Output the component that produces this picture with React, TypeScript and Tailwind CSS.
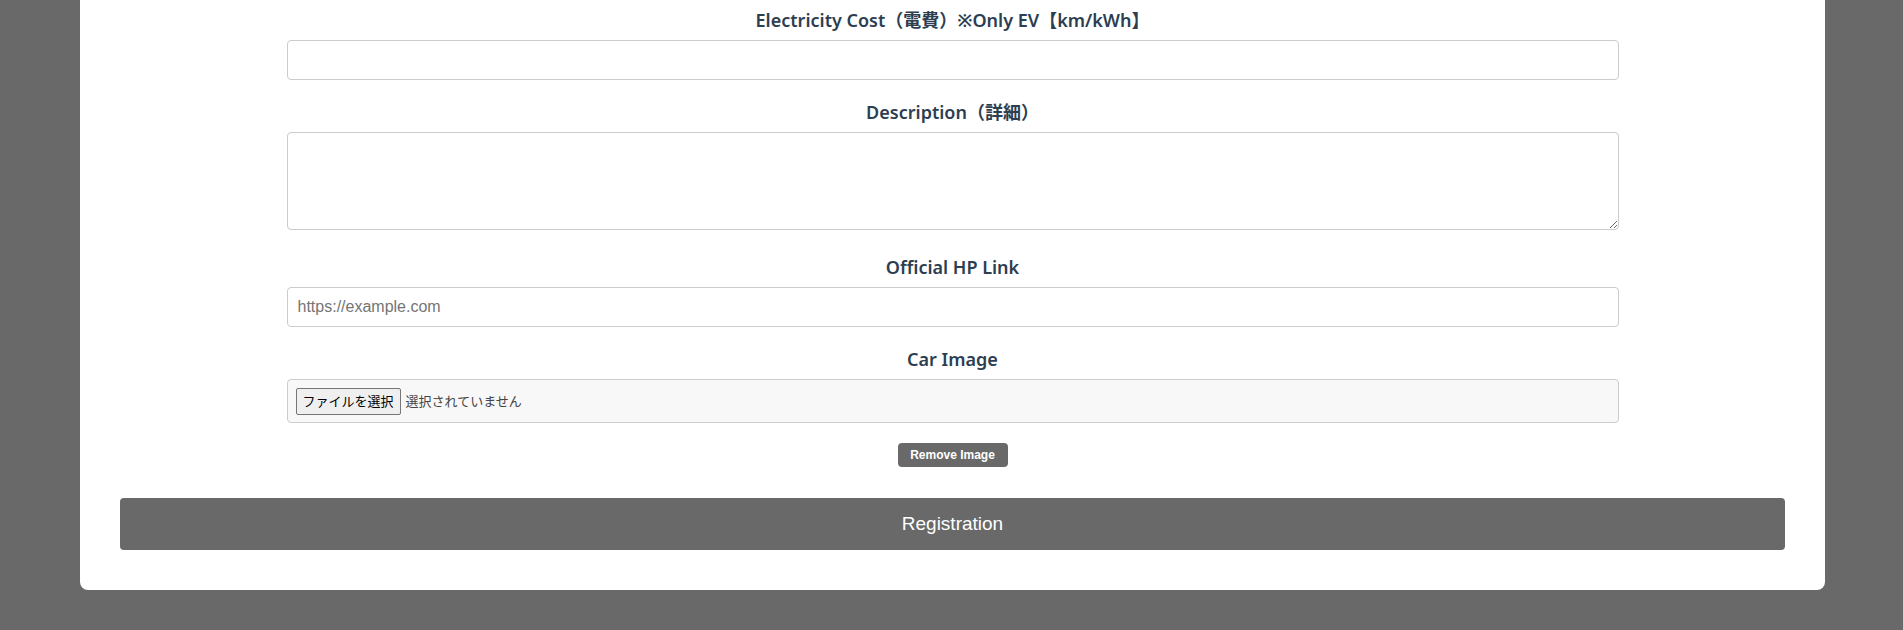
import React from 'react';

const labelFont = { fontFamily: '"Noto Sans", "Noto Sans CJK JP", sans-serif' };

interface FieldProps {
    label: string;
    children: React.ReactNode;
}

const Field: React.FC<FieldProps> = ({ label, children }) => (
    <div className="mb-5">
        <label
            className="block text-center text-[18px] leading-[24px] font-semibold text-[#2c3e50] mb-2"
            style={labelFont}
        >
            {label}
        </label>
        {children}
    </div>
);

const App: React.FC = () => {
    return (
        <div className="min-h-[630px] bg-[#696969] pb-[41px] font-['Liberation_Sans',Arial,sans-serif]">
            <div className="ml-20 w-[1745px] bg-white rounded-b-lg px-10 pt-2 pb-10">
                <div className="w-[80%] mx-auto">
                    <Field label="Electricity Cost（電費）※Only EV【km/kWh】">
                        <input
                            type="text"
                            className="block w-full h-[40px] border border-[#ccc] rounded px-[10px] text-[16px] outline-none"
                        />
                    </Field>
                    <Field label="Description（詳細）">
                        <div className="pb-[5px]">
                            <textarea className="block w-full h-[98px] border border-[#ccc] rounded px-[10px] py-2 text-[16px] outline-none" />
                        </div>
                    </Field>
                    <Field label="Official HP Link">
                        <input
                            type="text"
                            placeholder="https://example.com"
                            className="block w-full h-[40px] border border-[#ccc] rounded px-[10px] text-[16px] text-[#333] placeholder:text-[#757575] outline-none"
                        />
                    </Field>
                    <Field label="Car Image">
                        <div
                            className="flex items-center gap-[5px] w-full h-[44px] border border-[#ccc] rounded bg-[#f8f8f8] px-2"
                            style={{ fontFamily: '"Noto Sans CJK JP", sans-serif' }}
                        >
                            <span className="h-[27px] px-[6px] flex items-center border border-[#767676] rounded-[2px] bg-[#efefef] text-[13px] text-black">
                                ファイルを選択
                            </span>
                            <span className="text-[13px] text-[#444]">選択されていません</span>
                        </div>
                    </Field>
                    <div className="flex justify-center">
                        <button className="h-6 w-[110px] rounded bg-[#696969] text-white text-[12px] font-bold">
                            Remove Image
                        </button>
                    </div>
                </div>
                <button className="mt-[31px] w-full h-[52px] rounded bg-[#696969] text-white text-[19px]">
                    Registration
                </button>
            </div>
        </div>
    );
};

export default App;
